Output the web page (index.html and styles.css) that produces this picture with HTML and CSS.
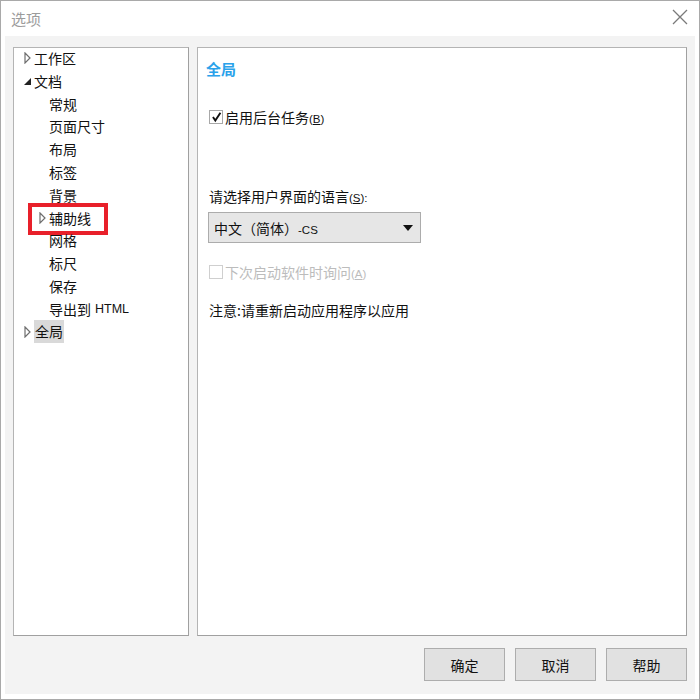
FILE: index.html
```html
<!DOCTYPE html>
<html lang="zh-CN">
<head>
  <meta charset="UTF-8" />
  <title>选项</title>
  <link rel="stylesheet" href="styles.css">
</head>
<body>
<div class="window">
  <!-- 标题栏 -->
  <div class="titlebar">
    <span class="title">选项</span>
    <svg class="close" width="16" height="16" viewBox="0 0 16 16">
      <path d="M1 1 L15 15 M15 1 L1 15" stroke="#7a7a7a" stroke-width="1.3" fill="none"/>
    </svg>
  </div>

  <div class="client">
    <div class="panels">
      <!-- 左侧树 -->
      <div class="tree">
        <div class="row"><span class="arrow"><svg width="7" height="12" viewBox="0 0 7 12"><path d="M1 1 L6 6 L1 11 Z" fill="none" stroke="#6e6e6e" stroke-width="1.2"/></svg></span>工作区</div>
        <div class="row"><span class="arrow"><svg width="7" height="12" viewBox="0 0 7 12"><path d="M7 3 L7 10 L0 10 Z" fill="#222"/></svg></span>文档</div>
        <div class="row child">常规</div>
        <div class="row child">页面尺寸</div>
        <div class="row child">布局</div>
        <div class="row child">标签</div>
        <div class="row child">背景</div>
        <div class="row child marked"><span class="arrow"><svg width="7" height="12" viewBox="0 0 7 12"><path d="M1 1 L6 6 L1 11 Z" fill="none" stroke="#6e6e6e" stroke-width="1.2"/></svg></span>辅助线</div>
        <div class="row child">网格</div>
        <div class="row child">标尺</div>
        <div class="row child">保存</div>
        <div class="row child">导出到 <span class="latin">HTML</span></div>
        <div class="row"><span class="arrow"><svg width="7" height="12" viewBox="0 0 7 12"><path d="M1 1 L6 6 L1 11 Z" fill="none" stroke="#6e6e6e" stroke-width="1.2"/></svg></span><span class="selected">全局</span></div>
      </div>

      <!-- 右侧设置 -->
      <div class="page">
        <div class="heading">全局</div>

        <div class="check-row first">
          <span class="box"><svg width="14" height="14" viewBox="0 0 14 14"><path d="M2.5 7 L5.5 11.5 L12 1.5" fill="none" stroke="#111" stroke-width="2.4"/></svg></span>
          <span>启用后台任务<span class="key">(<u>B</u>)</span></span>
        </div>

        <div class="label">请选择用户界面的语言<span class="key">(<u>S</u>):</span></div>
        <div class="select">
          <span>中文（简体）<span class="key">-CS</span></span>
          <svg width="10" height="6" viewBox="0 0 10 6"><path d="M0 0 L10 0 L5 6 Z" fill="#111"/></svg>
        </div>

        <div class="check-row disabled">
          <span class="box"></span>
          <span>下次启动软件时询问<span class="key">(<u>A</u>)</span></span>
        </div>

        <div class="note">注意:请重新启动应用程序以应用</div>
      </div>
    </div>

    <div class="buttons">
      <button>确定</button>
      <button>取消</button>
      <button>帮助</button>
    </div>
  </div>
</div>
</body>
</html>
```

FILE: styles.css
```css
* {
  margin: 0;
  padding: 0;
  box-sizing: border-box;
}

body {
  font-family: "Noto Sans CJK SC", "Noto Sans", sans-serif;
  font-size: 14px;
  color: #111;
  background: #fff;
}

.window {
  width: 700px;
  height: 700px;
  border: 1px solid #a9a9a9;
  background: #fff;
  display: flex;
  flex-direction: column;
}

.titlebar {
  height: 35px;
  display: flex;
  align-items: center;
  justify-content: space-between;
  padding: 0 11px 0 10px;
}

.title {
  font-size: 15px;
  color: #9c9c9c;
}

.close {
  margin-top: -3px;
}

.client {
  background: #f3f3f3;
  margin: 0 4px 5px 4px;
  flex: 1;
  padding: 11px 8px 12px 8px;
  display: flex;
  flex-direction: column;
}

.panels {
  display: flex;
  gap: 8px;
  height: 589px;
}

.tree {
  width: 176px;
  background: #fff;
  border: 1px solid #b4b4b4;
  border-right-color: #a0a0a0;
  border-bottom-color: #a0a0a0;
}

.row {
  height: 22.8px;
  line-height: 22.8px;
  display: flex;
  align-items: center;
  padding-left: 20px;
  white-space: nowrap;
  position: relative;
  top: -1px;
}

.row.child {
  padding-left: 35px;
}

.arrow {
  width: 10px;
  margin-left: -10px;
  display: flex;
  align-items: center;
}

.marked::after {
  content: "";
  box-sizing: border-box;
  position: absolute;
  left: 14px;
  top: -4px;
  width: 80px;
  height: 32px;
  border: 4px solid #e8202a;
}

.latin {
  font-family: "Liberation Sans", sans-serif;
  font-size: 12.5px;
  margin-left: 4px;
}

.selected {
  background: #d9d9d9;
  padding: 0 1px;
  line-height: 23px;
}

.page {
  flex: 1;
  background: #fff;
  border: 1px solid #b4b4b4;
  border-right-color: #a0a0a0;
  border-bottom-color: #a0a0a0;
  padding: 11px 0 0 11px;
}

.heading {
  margin-left: -3px;
  height: 20px;
  line-height: 20px;
  font-size: 15px;
  font-weight: bold;
  color: #2aa2ea;
}

.check-row {
  display: flex;
  align-items: center;
  height: 20px;
  gap: 2px;
  margin-top: 18px;
}

.check-row.first {
  margin-top: 28px;
}

.box {
  width: 14px;
  height: 14px;
  border: 1px solid #a8a8a8;
  background: #fff;
  display: flex;
  align-items: center;
  justify-content: center;
}

.box svg {
  margin-left: 1px;
  margin-top: -1px;
}

.key {
  font-family: "Liberation Sans", sans-serif;
  font-size: 11.5px;
}

.label {
  margin-top: 59px;
  height: 20px;
  line-height: 20px;
}

.select {
  margin-top: 6px;
  margin-left: -1px;
  width: 213px;
  height: 31px;
  background: #e6e6e6;
  border: 1px solid #acacac;
  display: flex;
  align-items: center;
  justify-content: space-between;
  padding: 0 7px 0 5px;
}

.disabled {
  color: #bcbcbc;
  margin-top: 19px;
}

.disabled .box {
  border-color: #cfcfcf;
}

.note {
  margin-top: 18px;
  height: 20px;
  line-height: 20px;
}

.buttons {
  display: flex;
  justify-content: flex-end;
  gap: 10px;
  margin-top: 12px;
}

.buttons button {
  width: 81px;
  height: 33px;
  background: #e1e1e1;
  border: 1px solid #adadad;
  font-family: "Noto Sans CJK SC", sans-serif;
  font-size: 14px;
  color: #111;
}
```
